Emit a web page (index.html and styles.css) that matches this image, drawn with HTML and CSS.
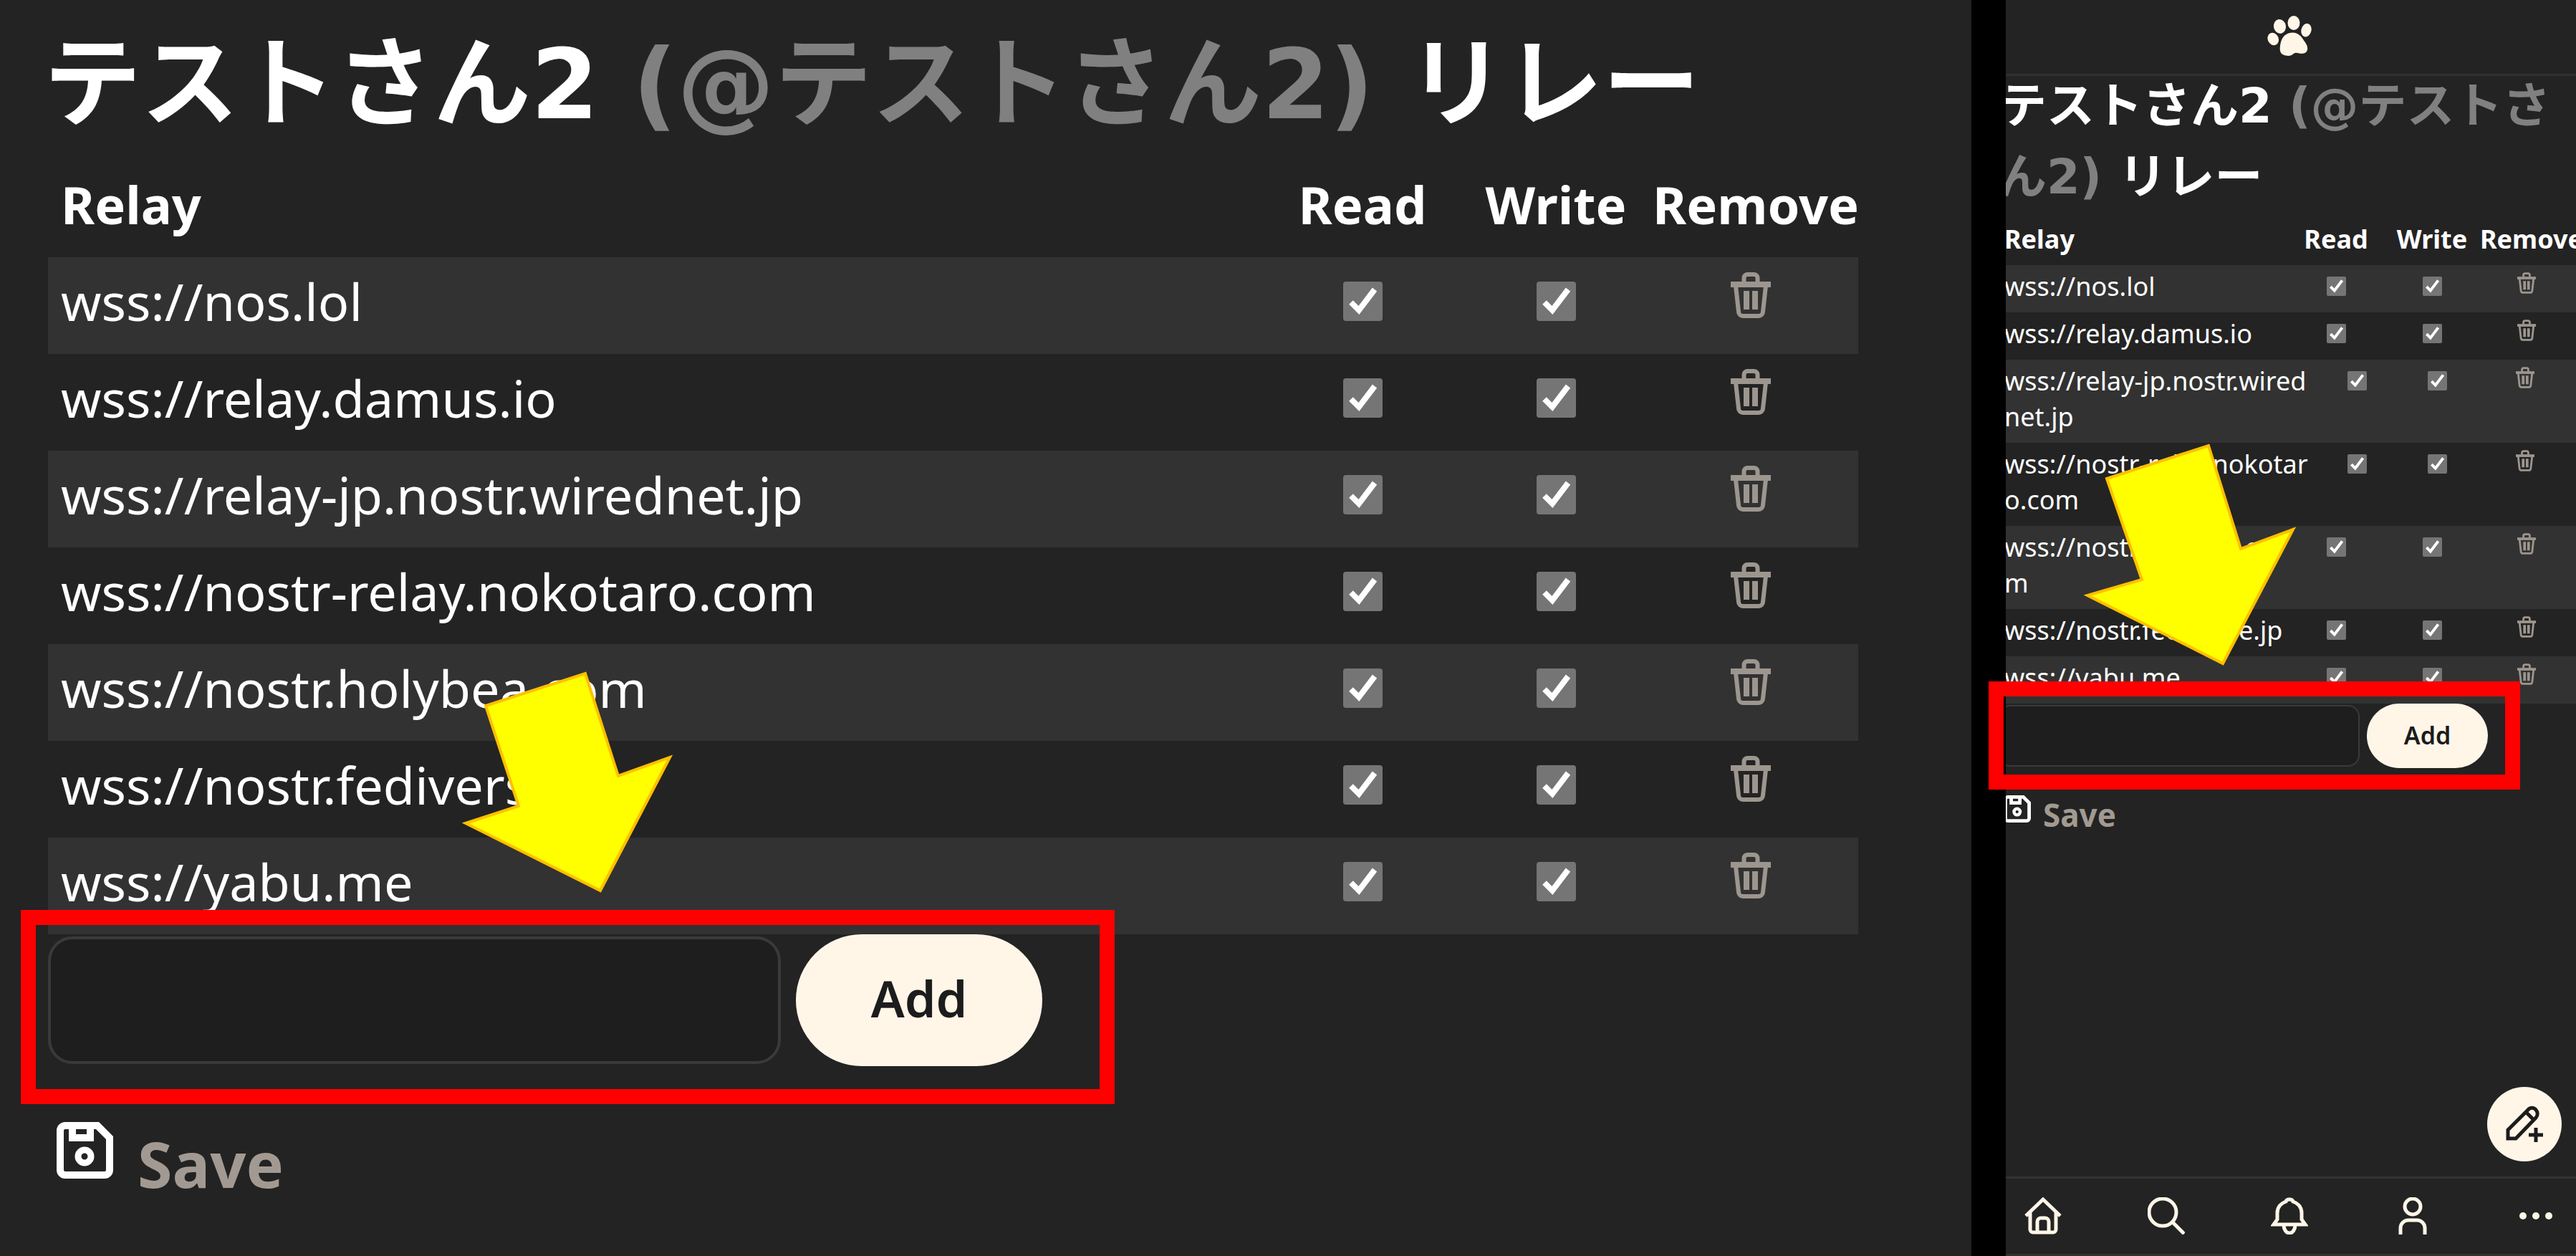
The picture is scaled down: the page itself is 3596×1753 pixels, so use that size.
FILE: index.html
```html
<!DOCTYPE html>
<html lang="ja">
<head>
<meta charset="utf-8">
<meta name="viewport" content="width=device-width, initial-scale=1">
<title>リレー</title>
<link rel="stylesheet" href="styles.css">
</head>
<body>
<svg class="sprite" aria-hidden="true">
  <symbol id="trash" viewBox="0 0 56 64">
    <path d="M0 17H56" stroke-width="8"/>
    <path d="M18.500 14V8a5 5 0 0 1 5-5h9a5 5 0 0 1 5 5v6M7 19l4 36a6 6 0 0 0 6 6h22a6 6 0 0 0 6-6l4-36" stroke-width="6"/>
    <path d="M22 26v26M34 26v26" stroke-width="8"/>
  </symbol>
  <symbol id="save" viewBox="0 0 79 79">
    <path d="M12 5H57L74 22V67a7 7 0 0 1-7 7H12a7 7 0 0 1-7-7V12a7 7 0 0 1 7-7zM22 5V22H47V5" stroke-width="10"/>
    <circle cx="39" cy="48" r="9" stroke-width="9"/>
  </symbol>
</svg>
<main class="boards">
  <section class="desktop">
    <h1 class="title">テストさん2 <span class="handle">(@テストさん2)</span> リレー</h1>
    <table class="relays">
      <thead>
        <tr><th>Relay</th><th>Read</th><th>Write</th><th>Remove</th></tr>
      </thead>
      <tbody>
        <tr><td>wss://nos.lol</td><td><input type="checkbox" aria-label="Read" checked></td><td><input type="checkbox" aria-label="Write" checked></td><td><button class="remove" aria-label="Remove"><svg><use href="#trash"/></svg></button></td></tr>
        <tr><td>wss://relay.damus.io</td><td><input type="checkbox" aria-label="Read" checked></td><td><input type="checkbox" aria-label="Write" checked></td><td><button class="remove" aria-label="Remove"><svg><use href="#trash"/></svg></button></td></tr>
        <tr><td>wss://relay-jp.nostr.wirednet.jp</td><td><input type="checkbox" aria-label="Read" checked></td><td><input type="checkbox" aria-label="Write" checked></td><td><button class="remove" aria-label="Remove"><svg><use href="#trash"/></svg></button></td></tr>
        <tr><td>wss://nostr-relay.nokotaro.com</td><td><input type="checkbox" aria-label="Read" checked></td><td><input type="checkbox" aria-label="Write" checked></td><td><button class="remove" aria-label="Remove"><svg><use href="#trash"/></svg></button></td></tr>
        <tr><td>wss://nostr.holybea.com</td><td><input type="checkbox" aria-label="Read" checked></td><td><input type="checkbox" aria-label="Write" checked></td><td><button class="remove" aria-label="Remove"><svg><use href="#trash"/></svg></button></td></tr>
        <tr><td>wss://nostr.fediverse.jp</td><td><input type="checkbox" aria-label="Read" checked></td><td><input type="checkbox" aria-label="Write" checked></td><td><button class="remove" aria-label="Remove"><svg><use href="#trash"/></svg></button></td></tr>
        <tr><td>wss://yabu.me</td><td><input type="checkbox" aria-label="Read" checked></td><td><input type="checkbox" aria-label="Write" checked></td><td><button class="remove" aria-label="Remove"><svg><use href="#trash"/></svg></button></td></tr>
      </tbody>
    </table>
    <form class="add">
      <input class="url" type="text" aria-label="Relay URL">
      <button class="submit" type="button">Add</button>
      <span class="frame"></span>
      <svg class="arrow" viewBox="640 930 304 322"><path d="M817 940L863 1083L935 1057L838 1243L650 1149L724 1125L678 985Z"/></svg>
    </form>
    <button class="save"><svg><use href="#save"/></svg><span>Save</span></button>
  </section>
  <section class="mobile">
    <header class="bar">
      <svg class="paw" viewBox="0 0 62 56">
        <ellipse cx="17.500" cy="15" rx="8.500" ry="10" transform="rotate(-12 17 15)"/>
        <ellipse cx="37" cy="10" rx="8.500" ry="10"/>
        <ellipse cx="54.500" cy="20" rx="7" ry="9.500" transform="rotate(14 54 20)"/>
        <ellipse cx="8" cy="32.500" rx="7.500" ry="9" transform="rotate(-25 8 32)"/>
        <path d="M35 23.500c9 0 13 6 16 11 3 4 6 8 5 13-1 5-7 6-11 5-4-1-7-1-9 1-2 2-6 3-10 2-8-1-9-7-8-13 1-7 3-18 17-19z"/>
      </svg>
    </header>
    <div class="page">
      <h2 class="title">テストさん2 <span class="handle">(@テストさん2)</span> リレー</h2>
      <table class="relays">
        <thead>
          <tr><th>Relay</th><th>Read</th><th>Write</th><th>Remove</th></tr>
        </thead>
        <tbody>
          <tr><td>wss://nos.lol</td><td><input type="checkbox" aria-label="Read" checked></td><td><input type="checkbox" aria-label="Write" checked></td><td><button class="remove" aria-label="Remove"><svg><use href="#trash"/></svg></button></td></tr>
          <tr><td>wss://relay.damus.io</td><td><input type="checkbox" aria-label="Read" checked></td><td><input type="checkbox" aria-label="Write" checked></td><td><button class="remove" aria-label="Remove"><svg><use href="#trash"/></svg></button></td></tr>
          <tr class="long"><td>wss://relay-jp.nostr.wirednet.jp</td><td><input type="checkbox" aria-label="Read" checked></td><td><input type="checkbox" aria-label="Write" checked></td><td><button class="remove" aria-label="Remove"><svg><use href="#trash"/></svg></button></td></tr>
          <tr class="long"><td>wss://nostr-relay.nokotaro.com</td><td><input type="checkbox" aria-label="Read" checked></td><td><input type="checkbox" aria-label="Write" checked></td><td><button class="remove" aria-label="Remove"><svg><use href="#trash"/></svg></button></td></tr>
          <tr><td>wss://nostr.holybea.com</td><td><input type="checkbox" aria-label="Read" checked></td><td><input type="checkbox" aria-label="Write" checked></td><td><button class="remove" aria-label="Remove"><svg><use href="#trash"/></svg></button></td></tr>
          <tr><td>wss://nostr.fediverse.jp</td><td><input type="checkbox" aria-label="Read" checked></td><td><input type="checkbox" aria-label="Write" checked></td><td><button class="remove" aria-label="Remove"><svg><use href="#trash"/></svg></button></td></tr>
          <tr><td>wss://yabu.me</td><td><input type="checkbox" aria-label="Read" checked></td><td><input type="checkbox" aria-label="Write" checked></td><td><button class="remove" aria-label="Remove"><svg><use href="#trash"/></svg></button></td></tr>
        </tbody>
      </table>
      <form class="add">
        <input class="url" type="text" aria-label="Relay URL">
        <button class="submit" type="button">Add</button>
        <span class="frame"></span>
        <svg class="arrow" viewBox="2905 612 304 322"><path d="M3083 621L3128 765L3201 738L3103 925L2914 830L2990 808L2941 667Z"/></svg>
      </form>
      <button class="save"><svg><use href="#save"/></svg><span>Save</span></button>
    </div>
    <button class="compose" aria-label="Post">
      <svg viewBox="0 0 52 52"><path d="M3 46V34L31 6a7 7 0 0 1 11 0a8 8 0 0 1 0 11L14 46zM28 9L39 20M42 31v20M32 41h20"/></svg>
    </button>
    <nav class="tabs">
      <a href="#home" aria-label="Home"><svg viewBox="0 0 52 52"><path d="M2 26L26 3L50 26M8 21V45a4 4 0 0 0 4 4H40a4 4 0 0 0 4-4V21M18 49V34a5 5 0 0 1 5-5h6a5 5 0 0 1 5 5V49"/></svg></a>
      <a href="#search" aria-label="Search"><svg viewBox="0 0 52 52"><circle cx="21" cy="21" r="19"/><path d="M35 35L51 51"/></svg></a>
      <a href="#notifications" aria-label="Notifications"><svg viewBox="0 0 52 52"><path d="M4 38H48L43 31V22C43 13 37 8 31 6C30 2 22 2 21 6C15 8 9 13 9 22V31zM18 39a8 11 0 0 0 16 0"/></svg></a>
      <a href="#profile" aria-label="Profile"><svg viewBox="0 0 52 52"><circle cx="26" cy="13" r="11"/><path d="M9 52V43a11 11 0 0 1 11-11H32a11 11 0 0 1 11 11V52"/></svg></a>
      <a href="#menu" aria-label="Menu"><svg class="dots" viewBox="0 0 52 52"><circle cx="8" cy="26" r="5"/><circle cx="26" cy="26" r="5"/><circle cx="44" cy="26" r="5"/></svg></a>
    </nav>
  </section>
</main>
</body>
</html>
```
FILE: styles.css
```css
* {
  box-sizing: border-box;
}

body {
  margin: 0;
  background: #000;
  color: #fff;
  font-family: "Noto Sans", "Noto Sans CJK JP", sans-serif;
}

button {
  padding: 0;
  border: 0;
  background: none;
  font-family: inherit;
}

.sprite {
  position: absolute;
  width: 0;
  height: 0;
}

.sprite symbol {
  fill: none;
  stroke: currentColor;
}

.boards {
  display: grid;
  grid-template-columns: minmax(0, 1fr) 796px;
  gap: 48px;
  min-height: 100vh;
}

.desktop,
.mobile {
  background: #232323;
}

.title {
  margin: 0;
  font-family: "DejaVu Sans", "Noto Sans CJK JP", sans-serif;
  font-weight: 700;
}

.handle {
  color: #808080;
}

.relays,
.relays thead,
.relays tbody {
  display: block;
}

.relays tr {
  display: grid;
}

.relays tbody tr:nth-child(odd) {
  background: #323232;
}

.relays th,
.relays td {
  padding: 0;
  text-align: center;
}

.relays th:first-child,
.relays td:first-child {
  text-align: left;
  word-break: break-all;
}

.relays input {
  appearance: none;
  margin: 0;
  border-radius: 4px;
  background: #757575 url("data:image/svg+xml,%3Csvg xmlns='http://www.w3.org/2000/svg' viewBox='0 0 55 55'%3E%3Cpath d='M11 29L22 40L44 11' fill='none' stroke='white' stroke-width='8'/%3E%3C/svg%3E") center / contain no-repeat;
}

.remove {
  color: #9d968e;
}

.remove svg {
  display: block;
}

.add {
  position: relative;
  display: flex;
  align-items: center;
}

.url {
  border-style: solid;
  border-color: #3a3a3a;
  background: #1e1e1e;
  color: #fff;
}

.submit {
  border-radius: 100px;
  background: #fff6e8;
  color: #1c1c1c;
  font-weight: 600;
}

.frame {
  position: absolute;
  z-index: 2;
  border: 21px solid #f00;
  pointer-events: none;
}

.arrow {
  position: absolute;
  width: 304px;
  height: 322px;
  fill: #ff0;
  stroke: #ffc000;
  stroke-width: 4px;
  pointer-events: none;
}

.save {
  display: flex;
  align-items: flex-start;
  color: #fff;
  font-weight: 700;
}

.save span {
  color: #a29a92;
  line-height: 1;
}

/* Desktop board */

.desktop {
  padding: 0 158px 0 67px;
}

.desktop .title {
  margin-left: -6px;
  padding-top: 12px;
  font-size: 136px;
  line-height: 212px;
}

.desktop .relays {
  font-size: 72px;
  line-height: 108px;
}

.desktop .relays tr {
  grid-template-columns: minmax(0, 1fr) 270px 270px 287px;
  height: 135px;
  padding-top: 7px;
}

.desktop .relays th:first-child,
.desktop .relays td:first-child {
  padding-left: 18px;
}

.desktop .relays td:last-child {
  padding-right: 14px;
}

.desktop .relays input {
  width: 55px;
  height: 55px;
}

.desktop .remove svg {
  width: 56px;
  height: 64px;
  margin-bottom: 4px;
}

.desktop .add {
  gap: 21px;
}

.desktop .url {
  width: 1023px;
  height: 178px;
  border-width: 4px;
  border-radius: 34px;
  font-size: 70px;
}

.desktop .submit {
  width: 344px;
  height: 184px;
  padding-bottom: 6px;
  font-size: 70px;
}

.desktop .frame {
  left: -38px;
  top: -34px;
  width: 1527px;
  height: 271px;
}

.desktop .arrow {
  left: 573px;
  top: -374px;
}

.desktop .save {
  gap: 34px;
  margin: 78px 0 0 12px;
  font-size: 88px;
}

.desktop .save svg {
  width: 79px;
  height: 79px;
}

.desktop .save span {
  padding-top: 14px;
}

/* Mobile board */

.mobile {
  position: relative;
  display: flex;
  flex-direction: column;
}

/* Gutter strip that hides the page content running past the board's left edge */
.mobile::before {
  content: "";
  position: absolute;
  z-index: 1;
  inset: 0 100% 0 -48px;
  background: #000;
}

.bar {
  display: flex;
  justify-content: center;
  padding: 22px 4px 25px 0;
  border-bottom: 3px solid #303030;
}

.paw {
  width: 62px;
  height: 56px;
  fill: #fff6e8;
}

.page {
  flex: 1;
  margin-left: -10px;
}

.mobile .title {
  margin: -7px 0 7px;
  font-size: 67px;
  line-height: 99px;
}

.mobile .relays {
  font-size: 36px;
  line-height: 50px;
}

.mobile .relays tr {
  grid-template-columns: minmax(0, 1fr) 134px 134px 134px;
  padding: 5px 0 11px;
}

.mobile .relays .long {
  grid-template-columns: minmax(0, 1fr) 112px 112px 138px;
}

.mobile .relays th:first-child,
.mobile .relays td:first-child {
  padding: 0 0 0 8px;
}

.mobile .relays td:last-child {
  padding-right: 4px;
}

.mobile .relays input {
  width: 27px;
  height: 27px;
  border-radius: 2px;
}

.mobile .remove svg {
  width: 26px;
  height: 30px;
  margin-bottom: 3px;
}

.mobile .add {
  gap: 10px;
}

.mobile .url {
  width: 504px;
  height: 86px;
  border-width: 2px;
  border-radius: 16px;
  font-size: 34px;
}

.mobile .submit {
  width: 169px;
  height: 90px;
  padding-bottom: 2px;
  font-size: 34px;
}

.mobile .frame {
  left: -14px;
  top: -31px;
  width: 742px;
  height: 151px;
}

.mobile .arrow {
  left: 115px;
  top: -369px;
}

.mobile .save {
  gap: 17px;
  margin: 38px 0 0 7px;
  font-size: 44px;
}

.mobile .save svg {
  width: 38px;
  height: 38px;
}

.mobile .save span {
  padding-top: 5px;
}

.compose {
  position: absolute;
  right: 20px;
  bottom: 132px;
  display: grid;
  place-items: center;
  width: 104px;
  height: 104px;
  border-radius: 50%;
  background: #fff6e8;
}

.compose svg {
  width: 52px;
  height: 52px;
  fill: none;
  stroke: #1c1c1c;
  stroke-width: 5px;
}

.tabs {
  display: flex;
  justify-content: space-between;
  padding: 26px 30px 27px 26px;
  border-top: 3px solid #323232;
  border-bottom: 3px solid #323232;
}

.tabs svg {
  display: block;
  width: 52px;
  height: 52px;
  fill: none;
  stroke: #fff6e8;
  stroke-width: 5px;
}

.tabs .dots {
  fill: #fff6e8;
  stroke: none;
}
```
